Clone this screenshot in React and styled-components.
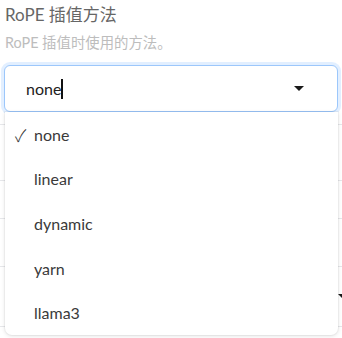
import React from "react";
import styled, { createGlobalStyle } from "styled-components";

const Global = createGlobalStyle`
  html, body { margin: 0; padding: 0; background: #ffffff; }
  body { font-family: Lato, "Noto Sans CJK SC", sans-serif; }
  * { box-sizing: border-box; }
`;

const Page = styled.div`
  position: relative;
  width: 342px;
  height: 338px;
  overflow: hidden;
  background: #fff;
`;

const Field = styled.div`
  padding: 3px 4px 0 4px;
`;

const Title = styled.div`
  padding-left: 1px;
  font-size: 17px;
  line-height: 24px;
  color: #666666;
`;

const Hint = styled.div`
  margin-top: 6px;
  padding-left: 1px;
  font-size: 14.4px;
  line-height: 20px;
  color: #bdbdbd;
`;

const SelectWrap = styled.div`
  position: relative;
  margin-top: 12px;
  z-index: 2;
`;

const SelectBox = styled.div`
  display: flex;
  align-items: center;
  justify-content: space-between;
  height: 47px;
  padding: 0 33px 0 21px;
  border: 1px solid #9cc7fb;
  border-radius: 6px;
  background: #fff;
  box-shadow: 0 0 0 3px rgba(191, 219, 254, 0.45);
`;

const Value = styled.span`
  display: inline-flex;
  align-items: center;
  font-size: 16px;
  line-height: 24px;
  color: #222;
`;

const Caret = styled.span`
  display: inline-block;
  width: 2px;
  height: 20px;
  background: #111;
`;

const Arrow = styled.span`
  width: 0;
  height: 0;
  border-left: 5px solid transparent;
  border-right: 5px solid transparent;
  border-top: 5px solid #1a1a1a;
`;

const Menu = styled.ul`
  position: absolute;
  top: 100%;
  left: 1px;
  right: 0;
  margin: 0;
  padding: 0;
  list-style: none;
  background: #fff;
  border-radius: 0 0 7px 7px;
  box-shadow: 0 1px 4px rgba(0, 0, 0, 0.12), 0 0 0 1px rgba(0, 0, 0, 0.03);
`;

const Item = styled.li`
  display: flex;
  align-items: center;
  height: 44.6px;
  padding-left: 10px;
  font-size: 16px;
  color: #3a3a3a;
`;

const Check = styled.span`
  width: 19px;
  visibility: ${(p) => (p.$on ? "visible" : "hidden")};
  font-family: "Noto Sans CJK SC", sans-serif;
  font-size: 17px;
  font-weight: 300;
  line-height: 1;
  color: #333;
`;

const Backdrop = styled.div`
  position: relative;
  z-index: 1;
`;

const Row = styled.div`
  display: flex;
  align-items: center;
  justify-content: flex-end;
  height: ${(p) => p.$h}px;
  border-bottom: 1px solid #e6e7ea;
`;

const SmallArrow = styled.span`
  margin-right: -6px;
  width: 0;
  height: 0;
  border-left: 5px solid transparent;
  border-right: 5px solid transparent;
  border-top: 5px solid #1a1a1a;
`;

const options = ["none", "linear", "dynamic", "yarn", "llama3"];

export default function App() {
  return (
    <Page>
      <Global />
      <Field>
        <Title>RoPE 插值方法</Title>
        <Hint>RoPE 插值时使用的方法。</Hint>
        <SelectWrap>
          <SelectBox>
            <Value>
              none
              <Caret />
            </Value>
            <Arrow />
          </SelectBox>
          <Menu>
            {options.map((o, i) => (
              <Item key={o}>
                <Check $on={i === 0}>✓</Check>
                <span>{o}</span>
              </Item>
            ))}
          </Menu>
        </SelectWrap>
      </Field>
      <Backdrop>
        <Row $h={13} />
        <Row $h={56} />
        <Row $h={38} />
        <Row $h={48} />
        <Row $h={60}>
          <SmallArrow />
        </Row>
      </Backdrop>
    </Page>
  );
}
